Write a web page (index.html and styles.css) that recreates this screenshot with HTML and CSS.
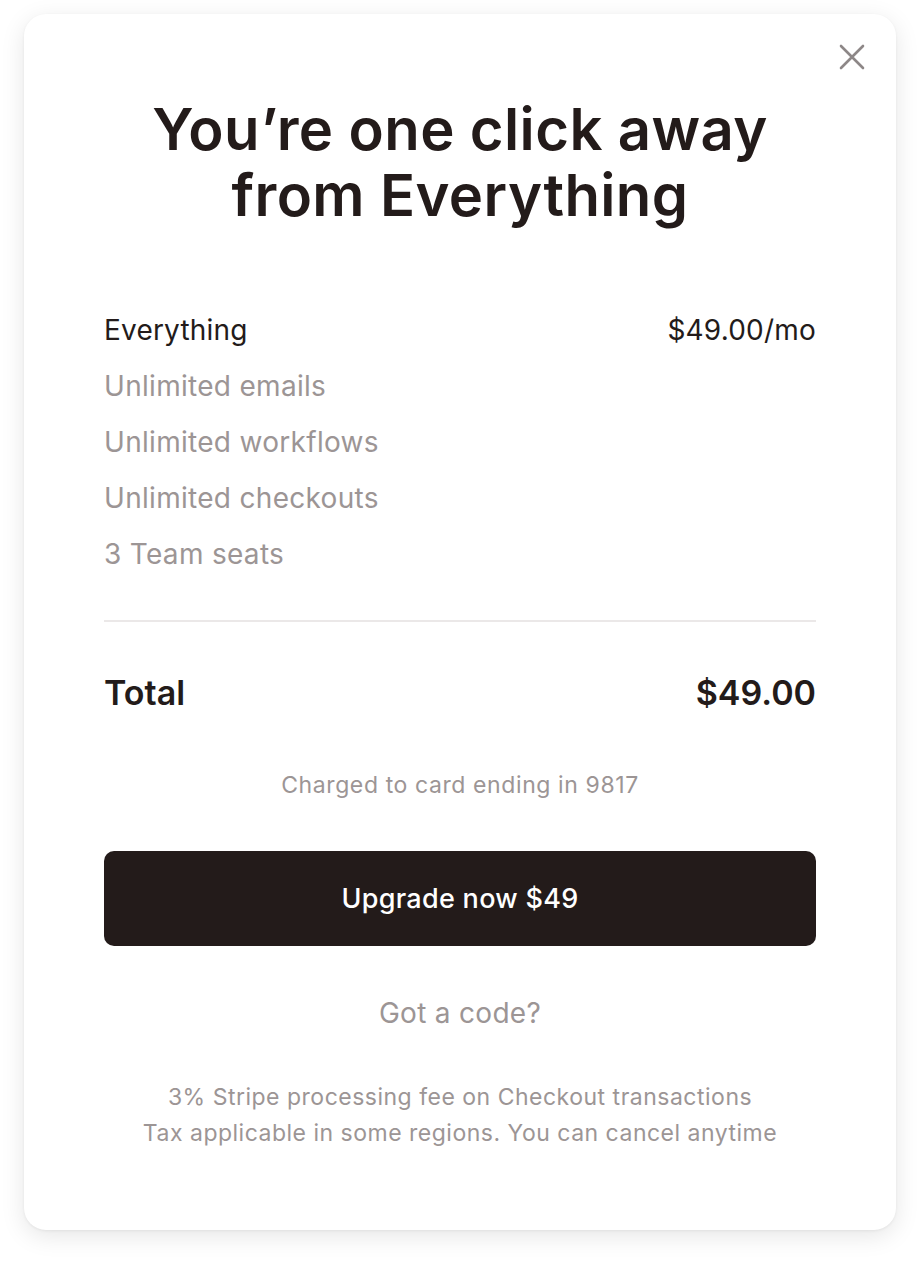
FILE: index.html
```html
<!DOCTYPE html>
<html lang="en">
<head>
<meta charset="utf-8">
<title>Upgrade</title>
<link rel="stylesheet" href="styles.css">
</head>
<body>
<div class="page">
  <div class="card">
    <button class="close" aria-label="Close">
      <svg width="28" height="28" viewBox="0 0 28 28"><path d="M3 3 L25 25 M25 3 L3 25" stroke="#8d8787" stroke-width="2.6" stroke-linecap="round" fill="none"/></svg>
    </button>
    <h1 class="title">You’re one click away<br>from Everything</h1>
    <div class="plan">
      <div class="row main"><span>Everything</span><span>$49.00/mo</span></div>
      <div class="row feat">Unlimited emails</div>
      <div class="row feat">Unlimited workflows</div>
      <div class="row feat">Unlimited checkouts</div>
      <div class="row feat">3 Team seats</div>
    </div>
    <div class="divider"></div>
    <div class="total"><span>Total</span><span>$49.00</span></div>
    <p class="charged">Charged to card ending in 9817</p>
    <button class="upgrade">Upgrade now $49</button>
    <p class="code">Got a code?</p>
    <p class="fine">3% Stripe processing fee on Checkout transactions<br>Tax applicable in some regions. You can cancel anytime</p>
  </div>
</div>
</body>
</html>
```
FILE: styles.css
```css
* { box-sizing: border-box; }
html, body { margin: 0; padding: 0; background: #fff; }
body { font-family: Inter, "Noto Sans", sans-serif; color: #231b1a; }
.page { padding: 14px 25px 37px 24px; }
.card {
  position: relative;
  background: #fff;
  border-radius: 22px;
  box-shadow: 0 6px 24px rgba(0,0,0,0.10), 0 1px 3px rgba(0,0,0,0.06);
  padding: 82px 80px 82px;
  height: 1216px;
}
.close {
  position: absolute; top: 29px; right: 30px;
  background: none; border: 0; padding: 0; width: 28px; height: 28px; cursor: pointer;
}
.close svg { display: block; }
.title {
  margin: 0; text-align: center; font-weight: 600;
  font-size: 58px; line-height: 66px; letter-spacing: 0.4px; color: #231b1a;
}
.plan { margin-top: 74px; }
.row { height: 56px; display: flex; align-items: center; font-size: 28px; letter-spacing: 0.2px; }
.row.main { justify-content: space-between; color: #231b1a; }
.row.feat { color: #9c9595; letter-spacing: 0.3px; }
.divider { height: 2px; background: #ebe8e8; margin-top: 38px; }
.total {
  display: flex; justify-content: space-between; align-items: center;
  font-size: 34px; font-weight: 600; height: 40px; margin-top: 50px;
}
.charged { margin: 58px 0 0; text-align: center; color: #9c9595; font-size: 23px; letter-spacing: 0.6px; line-height: 30px; }
.upgrade {
  display: block; width: 100%; height: 95px; margin-top: 51px;
  background: #231b1a; color: #fff; border: 0; border-radius: 10px;
  font-family: inherit; font-size: 27px; letter-spacing: 0.3px; font-weight: 500; cursor: pointer;
}
.code { margin: 50px 0 0; text-align: center; color: #9c9595; font-size: 28px; letter-spacing: 0.3px; line-height: 34px; }
.fine { margin: 49px 0 0; text-align: center; color: #9c9595; font-size: 23px; letter-spacing: 0.5px; line-height: 36px; }
```
